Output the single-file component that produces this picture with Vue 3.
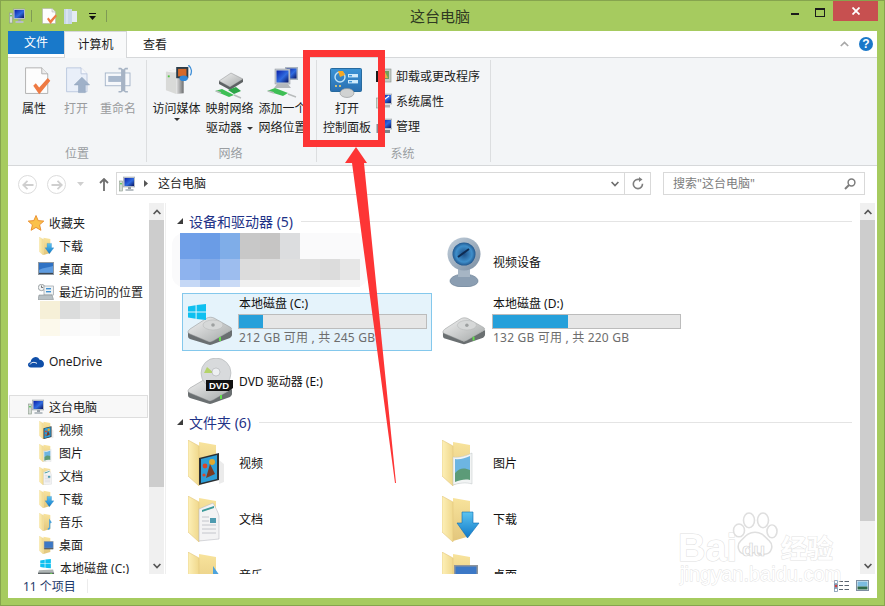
<script setup>
const bigButtons1 = [
  { icon: 'props', w: 27, h: 29, lines: ['属性'], cls: '' },
  { icon: 'open', w: 27, h: 29, lines: ['打开'], cls: 'off' },
  { icon: 'rename', w: 29, h: 29, lines: ['重命名'], cls: 'off' }
]
const bigButtons2 = [
  { icon: 'media', w: 28, h: 32, lines: ['访问媒体'], caret: 'below' },
  { icon: 'mapnet', w: 32, h: 34, lines: ['映射网络', '驱动器'], caret: 'inline' },
  { icon: 'addnet', w: 34, h: 34, lines: ['添加一个', '网络位置'] }
]
const smallTools = [
  { icon: 'uninstall', label: '卸载或更改程序' },
  { icon: 'sysprops', label: '系统属性' },
  { icon: 'manage', label: '管理' }
]
const favs = [
  { icon: 'desk', label: '桌面', w: 16, h: 13 },
  { icon: 'recent', label: '最近访问的位置', w: 16, h: 16 }
]
const folders = [
  { icon: 'film', label: '视频' },
  { icon: 'photo', label: '图片' },
  { icon: 'doc', label: '文档' },
  { icon: 'arrow', label: '下载' },
  { icon: 'music', label: '音乐' },
  { icon: 'deskov', label: '桌面' }
]
const mosaic = [
  { h: 26, c: ['#6f9fe8', '#6a9ce6', '#7fade8', '#c8c8c8', '#c6c5c4', '#dcdddf'] },
  { h: 21, c: ['#8eb3ee', '#82aae9', '#9dbdee', '#dcdcdc', '#dedede', '#e0e0e0', '#dfdfdf', '#dcdcdc', '#e6e6e6'] },
  { h: 7, c: ['#c5d8f6', '#a8c5f0', '#c9daf6', '#f0f0f0', '#f0f0f0', '#f2f2f2', '#f2f2f2', '#f4f4f4', '#f6f6f6'] }
]
const sideMosaic = [
  { h: 18, c: ['#f6f0d8', '#dbdcdc', '#e6e6e6', '#dcdcdc'] },
  { h: 17, c: ['#fcf9ec', '#fafafa', '#fbfbfb', '#f6f6f6'] }
]
</script>

<template>
  <div class="window">
    <svg class="defs" width="0" height="0" aria-hidden="true">
      <defs>
        <linearGradient id="gScreen" x1="0" y1="0" x2="1" y2="1"><stop offset="0" stop-color="#0a1fa8"/><stop offset=".55" stop-color="#2f6be0"/><stop offset="1" stop-color="#0a1560"/></linearGradient>
        <linearGradient id="gLeaf" x1="0" y1="0" x2="1" y2="0"><stop offset="0" stop-color="#fdf0b8"/><stop offset="1" stop-color="#f0d88c"/></linearGradient>
        <linearGradient id="gBack" x1="0" y1="0" x2="0" y2="1"><stop offset="0" stop-color="#f8e39c"/><stop offset="1" stop-color="#e2c67c"/></linearGradient>
        <linearGradient id="gDiskTop" x1="0" y1="0" x2="1" y2="1"><stop offset="0" stop-color="#f2f2f2"/><stop offset="1" stop-color="#a4a8a8"/></linearGradient>
        <linearGradient id="gTower" x1="0" y1="0" x2="1" y2="0"><stop offset="0" stop-color="#e4e4e4"/><stop offset="1" stop-color="#6c6e70"/></linearGradient>
        <linearGradient id="gArrow" x1="0" y1="0" x2="0" y2="1"><stop offset="0" stop-color="#5cc4f0"/><stop offset="1" stop-color="#0f78c8"/></linearGradient>
        <linearGradient id="gPanel" x1="0" y1="0" x2="0" y2="1"><stop offset="0" stop-color="#3a93d6"/><stop offset="1" stop-color="#2a6fb0"/></linearGradient>
        <radialGradient id="gLens"><stop offset="0" stop-color="#1d4f86"/><stop offset=".7" stop-color="#3f8fcb"/><stop offset="1" stop-color="#22588f"/></radialGradient>
        <linearGradient id="gRing" x1="0" y1="0" x2="1" y2="1"><stop offset="0" stop-color="#c3d0dc"/><stop offset="1" stop-color="#7b8ea2"/></linearGradient>

        <symbol id="pc" viewBox="0 0 16 16">
          <rect x="0.5" y="5" width="3" height="10" fill="#d4dbd4" stroke="#8a9a8a" stroke-width=".6"/>
          <rect x="1.3" y="7" width="1.4" height="1.4" fill="#35c43a"/>
          <rect x="4.5" y="1" width="11.5" height="10" fill="#c6ccd2" stroke="#8f98a0" stroke-width=".5"/>
          <rect x="5.5" y="2" width="9.5" height="8" fill="url(#gScreen)"/>
          <rect x="9" y="11" width="3" height="2" fill="#9aa2a8"/>
          <rect x="6.5" y="13" width="8" height="2" fill="#b8bfc4"/>
        </symbol>

        <symbol id="props" viewBox="0 0 30 34">
          <path d="M1 1H20L27 8V31H1Z" fill="#fdfdfd" stroke="#a8a8a8"/>
          <path d="M20 1V8H27" fill="#ececec" stroke="#a8a8a8"/>
          <path d="M10 22L13 19L17 24L27 13L30 16L17 32Z" fill="#ee7a43"/>
        </symbol>
        <symbol id="open" viewBox="0 0 30 34">
          <path d="M1 1H18L25 8V29H1Z" fill="#e9eff9" stroke="#b6c4dc"/>
          <path d="M18 1V8H25" fill="#f6f8fc" stroke="#b6c4dc"/>
          <path d="M10 21L19 12L28 21H23V30H15V21Z" fill="#9fb1c9" stroke="#8ca0ba" stroke-width=".6"/>
        </symbol>
        <symbol id="rename" viewBox="0 0 32 34">
          <rect x="0.5" y="7" width="29" height="15" fill="#f6f8fb" stroke="#9fb0c6"/>
          <rect x="4" y="10.500" width="18" height="7" fill="#a9b9cd"/>
          <path d="M17 1H20L22.500 3L25 1H28V3H25V28H28V30H25L22.500 28L20 30H17V28H20V3H17Z" fill="#a6b3c4" transform="translate(-1 0)"/>
        </symbol>
        <symbol id="media" viewBox="0 0 30 34">
          <path d="M1 7L12 4V31L1 27Z" fill="#d9dad8"/>
          <path d="M12 4L20 5V30L12 31Z" fill="url(#gTower)"/>
          <path d="M1 7L12 4L20 5L10 8Z" fill="#f2f2f2"/>
          <rect x="3" y="11" width="2" height="2" fill="#4cc43c"/>
          <path d="M12 2H25V14H12Z" fill="#2a3c4a"/>
          <rect x="14" y="4" width="9" height="8" fill="#d5692a"/>
          <path d="M25 0C29 3 29 8 27 11" stroke="#3f8fd8" stroke-width="1.4" fill="none"/>
          <ellipse cx="20" cy="14" rx="4.500" ry="3" fill="#2f86d6"/>
        </symbol>
        <symbol id="mapnet" viewBox="0 0 32 34">
          <path d="M5 14L17 6L29 12L16 20Z" fill="url(#gDiskTop)" stroke="#8c8f90" stroke-width=".5"/>
          <path d="M5 14L16 20L29 12V15L16 23L5 17Z" fill="#5e6264"/>
          <path d="M1 24L8 22L20 28L15 30Z" fill="#3ebf55"/>
          <path d="M14 23L22 20L27 24L20 27Z" fill="#2da548"/>
          <path d="M2 24L7 26M20 28L27 31" stroke="#b8bcbc" stroke-width="1.4"/>
        </symbol>
        <symbol id="addnet" viewBox="0 0 34 34">
          <rect x="19" y="1" width="13" height="13" fill="#a9b4c0"/>
          <rect x="20.500" y="2.500" width="10" height="10" fill="url(#gScreen)"/>
          <rect x="9" y="3" width="15" height="15" fill="#c5cbd2" stroke="#8d959c" stroke-width=".5"/>
          <rect x="10.500" y="4.500" width="12" height="12" fill="url(#gScreen)"/>
          <path d="M11 18H22L25 22H8Z" fill="#b4b8bc"/>
          <path d="M1 25L9 22L22 27L17 30Z" fill="#3ebf55"/>
          <path d="M2 25L8 27M22 28L30 31" stroke="#b8bcbc" stroke-width="1.4"/>
        </symbol>
        <symbol id="panel" viewBox="0 0 34 30">
          <rect x="0.5" y="0.5" width="31" height="23" rx="1" fill="url(#gPanel)" stroke="#276a9e"/>
          <circle cx="10" cy="9" r="5" fill="none" stroke="#bfe2f8" stroke-width="1.4"/>
          <path d="M8 3H13L15 7L10 9Z" fill="#f7a823"/>
          <rect x="18" y="6" width="10" height="3.4" fill="#cfeafb"/>
          <rect x="18" y="12" width="10" height="3.4" fill="#cfeafb"/>
          <rect x="19" y="7" width="3" height="1.4" fill="#3f95d8"/>
          <rect x="19" y="13" width="3" height="1.4" fill="#3f95d8"/>
          <circle cx="6" cy="18" r="1" fill="#ffd96a"/>
          <circle cx="10" cy="18" r="1" fill="#ffd96a"/>
          <ellipse cx="17" cy="25" rx="7" ry="4.500" fill="#d0d2d2" stroke="#8f9294" stroke-width=".6"/>
        </symbol>
        <symbol id="uninstall" viewBox="0 0 16 16">
          <rect x="0" y="3" width="2" height="11" fill="#1a1a1a"/>
          <rect x="3" y="1" width="12" height="13" fill="#c6cbc6" stroke="#88908a" stroke-width=".6"/>
          <rect x="5" y="3" width="8" height="8" fill="#6f9f5f"/>
          <path d="M6 10L9 4L12 10Z" fill="#e2b24a"/>
        </symbol>
        <symbol id="sysprops" viewBox="0 0 16 16">
          <rect x="0.5" y="5" width="3" height="10" fill="#d4dbd4" stroke="#8a9a8a" stroke-width=".6"/>
          <rect x="4" y="1" width="12" height="10" fill="#c6ccd2" stroke="#8f98a0" stroke-width=".5"/>
          <rect x="5" y="2" width="10" height="8" fill="url(#gScreen)"/>
          <path d="M6.500 8L9 6L13 3" stroke="#fff" stroke-width="1.3" fill="none"/>
          <rect x="7" y="12" width="7" height="2.500" fill="#aab0b6"/>
        </symbol>
        <symbol id="manage" viewBox="0 0 16 16">
          <rect x="0.5" y="6" width="3" height="9" fill="#878d92"/>
          <rect x="4" y="1" width="12" height="10" fill="#c6ccd2" stroke="#8f98a0" stroke-width=".5"/>
          <rect x="5" y="2" width="10" height="8" fill="url(#gScreen)"/>
          <rect x="6" y="12" width="8" height="3" fill="#7c8388"/>
        </symbol>

        <symbol id="star" viewBox="0 0 16 16">
          <path d="M8 0.5L10.200 5.600L15.800 6.100L11.600 9.800L12.900 15.300L8 12.400L3.100 15.300L4.400 9.800L0.200 6.100L5.800 5.600Z" fill="#fbc14a" stroke="#e88a2a" stroke-width=".9"/>
        </symbol>
        <symbol id="cloud" viewBox="0 0 16 12">
          <path d="M3 11.500C0.800 11.500 0 10 0 8.800C0 7.200 1.200 6.300 2.500 6.200C3 3.200 5 1 7.600 1C9.600 1 11 2.200 11.600 3.800C14 3.800 16 5.400 16 8C16 10.400 14.400 11.500 12.600 11.500Z" fill="#0f4ea8"/>
          <path d="M2 8.400C3.600 6.200 6 5.600 9 7.400" stroke="#fff" stroke-width="1" fill="none"/>
        </symbol>
        <symbol id="desk" viewBox="0 0 16 13">
          <rect x="0" y="0" width="16" height="13" fill="#8e98a2"/>
          <rect x="1" y="1" width="14" height="9.500" fill="#2f72c4"/>
          <path d="M1 8C5 5.500 10 5.500 15 4V10.500H1Z" fill="#5d9be0"/>
          <rect x="1" y="11" width="14" height="1" fill="#3c4650"/>
        </symbol>
        <symbol id="recent" viewBox="0 0 16 16">
          <circle cx="3.500" cy="3.500" r="3.200" fill="#f2f4f4" stroke="#7c8488" stroke-width=".7"/>
          <path d="M3.500 1.500V3.500H5.200" stroke="#444" stroke-width=".7" fill="none"/>
          <rect x="6" y="2" width="9.500" height="9" fill="#eef2f4" stroke="#8a9298" stroke-width=".6"/>
          <rect x="8" y="4" width="5" height="1.400" fill="#3f90d0"/>
          <rect x="8" y="7" width="5" height="1.400" fill="#3f90d0"/>
          <path d="M1 11H14L15.500 15.500H0Z" fill="#b8c0c4" stroke="#7a8286" stroke-width=".5"/>
        </symbol>

        <symbol id="fd" viewBox="0 0 44 46">
          <path d="M11 2L28 5V40L11 45Z" fill="url(#gBack)"/>
          <path d="M0 0L11 6V46L0 36Z" fill="url(#gLeaf)" stroke="#e2c67c" stroke-width=".6"/>
        </symbol>
        <symbol id="ov-film" viewBox="0 0 44 46">
          <path d="M31 20L36 24V42L31 44Z" fill="#000" opacity=".08"/>
          <path d="M11 18L31 13V40L11 45Z" fill="#2c2f33"/>
          <path d="M13 19L29 15V39L13 43Z" fill="#2d9fd8"/>
          <circle cx="17" cy="26" r="2.400" fill="#d9462a"/>
          <circle cx="24" cy="22" r="3" fill="#e2a92e"/>
          <path d="M22 24L27 34L18 38Z" fill="#7a3a22"/>
          <circle cx="16" cy="35" r="1.600" fill="#d9462a"/>
        </symbol>
        <symbol id="ov-photo" viewBox="0 0 44 46">
          <path d="M11 17C17 18 24 16 30 13V44C24 42 17 43 11 45Z" fill="#f2f4f4" stroke="#bfc4c6" stroke-width=".5"/>
          <path d="M13 19C18 20 23 18 28 16V30C23 30 18 32 13 33Z" fill="#6db5e2"/>
          <path d="M13 33C18 27 23 28 28 30V40C23 39 18 40 13 42Z" fill="#5c9b78"/>
        </symbol>
        <symbol id="ov-doc" viewBox="0 0 44 46">
          <path d="M11 13L25 7C28 12 30 16 31 20V43L11 45Z" fill="#f3f3f4" stroke="#bcbec4" stroke-width=".6"/>
          <path d="M14 14L26 10V12L14 16Z" fill="#3d9a9a"/>
          <rect x="22" y="22" width="6" height="5" fill="#4f9bb0"/>
          <path d="M14 21H21M14 25H21M14 29H28M14 33H28M14 37H28" stroke="#c4c6cc" stroke-width="1"/>
        </symbol>
        <symbol id="ov-arrow" viewBox="0 0 44 46">
          <path d="M20 16H31V27H37L25.500 42L15 27H20Z" fill="url(#gArrow)" stroke="#0f6cb4" stroke-width=".6"/>
        </symbol>
        <symbol id="ov-music" viewBox="0 0 44 46">
          <path d="M25 14L32 24C29 24 28 26 28 30V38C28 41 23 43 21 41C21 38 24 36 25 36Z" fill="#4da3dc"/>
        </symbol>
        <symbol id="ov-deskov" viewBox="0 0 44 46">
          <rect x="12" y="13" width="24" height="20" fill="#8e959c"/>
          <rect x="13.500" y="14.500" width="21" height="15" fill="#3c78c6"/>
          <rect x="13" y="31" width="22" height="2" fill="#3a4148"/>
        </symbol>

        <symbol id="win" viewBox="0 0 18 16">
          <path d="M0 2.400L7.600 1.200V7.500H0ZM8.600 1L18 0V7.500H8.600ZM0 8.500H7.600V14.800L0 13.600ZM8.600 8.500H18V16L8.600 15Z" fill="#0fc0f0"/>
        </symbol>
        <symbol id="hdd" viewBox="0 0 46 30">
          <path d="M1 17L23 27L45 15V20C45 21 44 22 43 23L25 29.500C24 30 22 30 21 29.500L3 24C2 23.500 1 23 1 21Z" fill="#6a6f71"/>
          <path d="M1 17C1 16 2 15 3 14L20 3C22 2 25 2 27 3L43 12C45 13 45 14.500 43 16L26 26C24 27 22 27 20 26L3 19C2 18.500 1 18 1 17Z" fill="url(#gDiskTop)" stroke="#8c8f90" stroke-width=".5"/>
          <ellipse cx="26" cy="10" rx="10" ry="5" fill="#d6d8d8" stroke="#b4b6b6" stroke-width=".5"/>
          <circle cx="26" cy="10" r="1.800" fill="#9da0a0"/>
          <rect x="32" y="22" width="2" height="4" fill="#62e04a"/>
        </symbol>
        <symbol id="dvd" viewBox="0 0 46 46">
          <path d="M1 33L23 43L45 31V36C45 37 44 38 43 39L25 45.500C24 46 22 46 21 45.500L3 40C2 39.500 1 39 1 37Z" fill="#6a6f71"/>
          <path d="M1 33C1 32 2 31 3 30L20 20H40L43 28C45 29 45 30.500 43 32L26 42C24 43 22 43 20 42L3 35C2 34.500 1 34 1 33Z" fill="url(#gDiskTop)" stroke="#8c8f90" stroke-width=".5"/>
          <circle cx="29" cy="15" r="15" fill="#d8dadc" stroke="#a5a8aa" stroke-width=".5"/>
          <path d="M20 9L27 15L17 15Z" fill="#b4d36a"/>
          <circle cx="29" cy="14" r="4" fill="#eef0f2" stroke="#a0a3a6" stroke-width=".5"/>
          <path d="M19 22H46V30L42 33H19Z" fill="#111"/>
          <text x="32" y="31" text-anchor="middle" font-size="9.500" font-weight="700" fill="#fff" font-family="Liberation Sans, sans-serif">DVD</text>
          <rect x="33" y="37" width="2" height="4" fill="#62e04a"/>
        </symbol>
        <symbol id="webcam" viewBox="0 0 34 50">
          <path d="M3 44C3 40 10 37 17 37C24 37 31 40 31 44C31 48 24 50 17 50C10 50 3 48 3 44Z" fill="#8b9eb2" stroke="#647a90" stroke-width=".6"/>
          <rect x="11" y="31" width="12" height="9" fill="#a6b5c4"/>
          <circle cx="17" cy="17" r="16.500" fill="url(#gRing)"/>
          <circle cx="17" cy="17" r="11.500" fill="url(#gLens)"/>
          <path d="M11 20L22 12" stroke="#0e2b52" stroke-width="2"/>
        </symbol>

        <symbol id="disksmall" viewBox="0 0 18 18">
          <use href="#win" x="2" y="0" width="12" height="10"/>
          <path d="M1 12L16 11L17 15H0Z" fill="#aeb4b4"/>
          <rect x="0" y="14.500" width="17" height="3" fill="#5d6264"/>
          <rect x="13" y="15" width="2" height="1.500" fill="#62e04a"/>
        </symbol>
      </defs>
    </svg>

    <header class="titlebar">
      <div class="qat">
        <svg class="qi" width="16" height="16"><use href="#pc"/></svg>
        <i class="qsep"></i>
        <svg class="qdoc" width="15" height="17"><use href="#props"/></svg>
        <svg class="qfold" width="14" height="15" viewBox="0 0 14 15">
          <path d="M0 0H8V15H0Z" fill="#c9d7ea"/><path d="M8 2H13V13H8Z" fill="#e4ebf4"/><path d="M3 0V15" stroke="#e8eef7"/>
        </svg>
        <svg class="qdrop" width="7" height="7" viewBox="0 0 7 7"><path d="M0 0H7V1H0ZM0 3H7L3.500 7Z" fill="#111"/></svg>
        <i class="qsep last"></i>
      </div>
      <div class="title">这台电脑</div>
      <div class="controls">
        <svg class="c-min" width="8" height="2"><rect width="8" height="2" fill="#1b1b1b"/></svg>
        <i class="c-max"></i>
        <div class="c-close">
          <svg width="8" height="8" viewBox="0 0 8 8"><path d="M0.5 0.5L7.500 7.500M7.500 0.5L0.5 7.500" stroke="#fff" stroke-width="1.800"/></svg>
        </div>
      </div>
    </header>

    <div class="tabs">
      <div class="tab-file">文件</div>
      <div class="tab-on">计算机</div>
      <div class="tab-off">查看</div>
      <div class="tab-right">
        <svg width="9" height="6" viewBox="0 0 9 6"><path d="M0.800 5L4.500 1.400L8.200 5" stroke="#a8a8a8" stroke-width="1.700" fill="none"/></svg>
        <div class="help">?</div>
      </div>
    </div>

    <section class="ribbon">
      <div class="group g1">
        <div class="tools">
          <div v-for="b in bigButtons1" :key="b.icon" class="big" :class="b.cls">
            <div class="big-ico" :class="'i-' + b.icon"><svg :width="b.w" :height="b.h"><use :href="'#' + b.icon"/></svg></div>
            <div v-for="l in b.lines" :key="l" class="big-line">{{ l }}</div>
          </div>
        </div>
        <div class="caption">位置</div>
      </div>
      <div class="group g2">
        <div class="tools">
          <div v-for="b in bigButtons2" :key="b.icon" class="big">
            <div class="big-ico" :class="'i-' + b.icon"><svg :width="b.w" :height="b.h"><use :href="'#' + b.icon"/></svg></div>
            <div v-for="(l, i) in b.lines" :key="l" class="big-line">{{ l }}<i v-if="b.caret === 'inline' && i === 1" class="caret inl"></i></div>
            <i v-if="b.caret === 'below'" class="caret blw"></i>
          </div>
        </div>
        <div class="caption">网络</div>
      </div>
      <div class="group g3">
        <div class="tools">
          <div class="big cp">
            <div class="big-ico i-panel"><svg width="34" height="30"><use href="#panel"/></svg></div>
            <div class="big-line">打开</div>
            <div class="big-line">控制面板</div>
          </div>
          <div class="small-list">
            <div v-for="s in smallTools" :key="s.icon" class="small-row">
              <svg width="16" height="16"><use :href="'#' + s.icon"/></svg>
              <span>{{ s.label }}</span>
            </div>
          </div>
        </div>
        <div class="caption">系统</div>
      </div>
    </section>

    <nav class="navbar">
      <div class="round"><svg width="12" height="10" viewBox="0 0 12 10"><path d="M5.500 0.800L1.200 5L5.500 9.200M1.500 5H11.500" stroke="#cfcfcf" stroke-width="1.800" fill="none"/></svg></div>
      <div class="round r2"><svg width="12" height="10" viewBox="0 0 12 10"><path d="M6.500 0.800L10.800 5L6.500 9.200M10.500 5H0.500" stroke="#cfcfcf" stroke-width="1.800" fill="none"/></svg></div>
      <svg class="navdrop" width="7" height="4" viewBox="0 0 7 4"><path d="M0 0H7L3.500 4Z" fill="#cfcfcf"/></svg>
      <svg class="navup" width="10" height="13" viewBox="0 0 10 13"><path d="M5 1V13M1 5L5 1L9 5" stroke="#6e6e6e" stroke-width="1.800" fill="none"/></svg>
      <div class="address">
        <svg class="a-pc" width="16" height="16"><use href="#pc"/></svg>
        <svg class="a-tri" width="4" height="7" viewBox="0 0 4 7"><path d="M0 0L4 3.500L0 7Z" fill="#555"/></svg>
        <span class="a-text">这台电脑</span>
        <svg class="a-chev" width="8" height="6" viewBox="0 0 8 6"><path d="M0.600 1L4 4.600L7.400 1" stroke="#6d6d6d" stroke-width="1.600" fill="none"/></svg>
        <div class="a-refresh">
          <svg width="12" height="13" viewBox="0 0 12 13"><path d="M10.500 6.800A4.600 4.600 0 1 1 6 2.400H8" stroke="#7f7f7f" stroke-width="1.600" fill="none"/><path d="M7 0L10.500 2.400L7 5Z" fill="#7f7f7f"/></svg>
        </div>
      </div>
      <div class="search">
        <span>搜索"这台电脑"</span>
        <svg width="12" height="12" viewBox="0 0 12 12"><circle cx="7.500" cy="4.500" r="3.400" fill="none" stroke="#7d7d7d" stroke-width="1.500"/><path d="M5 7L1 11" stroke="#7d7d7d" stroke-width="2"/></svg>
      </div>
    </nav>

    <div class="main">
      <aside class="sidebar">
        <div class="side-list">
          <div class="row l1"><svg width="16" height="16"><use href="#star"/></svg><span>收藏夹</span></div>
          <div class="row l2"><svg class="sf" width="15" height="18" viewBox="0 0 37 45"><use href="#fd" width="44" height="46"/><use href="#ov-arrow" width="44" height="46"/></svg><span>下载</span></div>
          <div v-for="f in favs" :key="f.icon" class="row l2"><svg :width="f.w" :height="f.h"><use :href="'#' + f.icon"/></svg><span>{{ f.label }}</span></div>
          <div class="side-mosaic">
            <div v-for="(r, i) in sideMosaic" :key="i" class="m-row" :style="{ height: r.h + 'px' }">
              <i v-for="(c, j) in r.c" :key="j" class="tile" :style="{ background: c }"></i>
            </div>
          </div>
          <div class="row l1"><svg width="16" height="12"><use href="#cloud"/></svg><span>OneDrive</span></div>
          <div class="side-gap"></div>
          <div class="row l1 sel"><svg width="16" height="16"><use href="#pc"/></svg><span>这台电脑</span></div>
          <div v-for="p in folders" :key="p.icon" class="row l2">
            <svg class="sf" width="15" height="18" viewBox="0 0 37 45"><use href="#fd" width="44" height="46"/><use :href="'#ov-' + p.icon" width="44" height="46"/></svg><span>{{ p.label }}</span>
          </div>
          <div class="row l2"><svg width="17" height="17"><use href="#disksmall"/></svg><span>本地磁盘 (C:)</span></div>
        </div>
      </aside>
      <div class="scroll side-scroll">
        <div class="sb-btn"><svg width="8" height="6" viewBox="0 0 8 6"><path d="M0.600 5L4 1.400L7.400 5" stroke="#555" stroke-width="1.700" fill="none"/></svg></div>
        <div class="sb-thumb t1"></div>
        <div class="sb-track"></div>
        <div class="sb-btn"><svg width="8" height="6" viewBox="0 0 8 6"><path d="M0.600 1L4 4.600L7.400 1" stroke="#555" stroke-width="1.700" fill="none"/></svg></div>
      </div>

      <main class="content">
        <div class="heading"><i class="tri"></i><span>设备和驱动器 (5)</span><i class="rule"></i></div>
        <div class="grid devices">
          <div class="cell">
            <div class="mosaic">
              <div v-for="(r, i) in mosaic" :key="i" class="m-row" :style="{ height: r.h + 'px' }">
                <i v-for="(c, j) in r.c" :key="j" class="tile" :style="{ background: c }"></i>
              </div>
            </div>
          </div>
          <div class="cell center">
            <div class="ico"><svg width="34" height="50"><use href="#webcam"/></svg></div>
            <div class="name">视频设备</div>
          </div>
          <div class="cell drive selected">
            <div class="ico disk">
              <svg class="winlogo" width="18" height="16"><use href="#win"/></svg>
              <svg width="46" height="30"><use href="#hdd"/></svg>
            </div>
            <div class="txt">
              <div class="dname">本地磁盘 (C:)</div>
              <div class="bar"><i class="fill c"></i></div>
              <div class="info">212 GB 可用 , 共 245 GB</div>
            </div>
          </div>
          <div class="cell drive">
            <div class="ico disk"><svg width="44" height="30"><use href="#hdd"/></svg></div>
            <div class="txt">
              <div class="dname">本地磁盘 (D:)</div>
              <div class="bar"><i class="fill d"></i></div>
              <div class="info">132 GB 可用 , 共 220 GB</div>
            </div>
          </div>
          <div class="cell center dvdcell">
            <div class="ico"><svg width="46" height="46"><use href="#dvd"/></svg></div>
            <div class="name">DVD 驱动器 (E:)</div>
          </div>
        </div>

        <div class="heading h2"><i class="tri"></i><span>文件夹 (6)</span><i class="rule"></i></div>
        <div class="grid folders">
          <div v-for="f in folders" :key="f.icon" class="cell center">
            <div class="ico"><svg width="44" height="46" viewBox="0 0 44 46"><use href="#fd"/><use :href="'#ov-' + f.icon"/></svg></div>
            <div class="name">{{ f.label }}</div>
          </div>
        </div>
      </main>

      <div class="scroll main-scroll">
        <div class="sb-btn"><svg width="8" height="6" viewBox="0 0 8 6"><path d="M0.600 5L4 1.400L7.400 5" stroke="#555" stroke-width="1.700" fill="none"/></svg></div>
        <div class="sb-thumb t2"></div>
        <div class="sb-track"></div>
        <div class="sb-btn"><svg width="8" height="6" viewBox="0 0 8 6"><path d="M0.600 1L4 4.600L7.400 1" stroke="#555" stroke-width="1.700" fill="none"/></svg></div>
      </div>
    </div>

    <footer class="status">
      <span class="count">11 个项目</span>
      <i class="status-sep"></i>
      <div class="views">
        <svg width="15" height="12" viewBox="0 0 15 12">
          <rect x="0.5" y="0.5" width="3" height="3" fill="#fff" stroke="#7b93ad" stroke-width=".8"/>
          <rect x="0.5" y="4.500" width="3" height="3" fill="#d04040" stroke="#7b93ad" stroke-width=".8"/>
          <rect x="0.5" y="8.500" width="3" height="3" fill="#fff" stroke="#7b93ad" stroke-width=".8"/>
          <path d="M5 1.500H9M10.500 1.500H15M5 5.500H9M10.500 5.500H15M5 9.500H9M10.500 9.500H15" stroke="#5a6470" stroke-width="1"/>
        </svg>
        <svg width="13" height="11" viewBox="0 0 13 11">
          <rect x="0.5" y="0.5" width="12" height="10" fill="#e8eef2" stroke="#7d8ea0"/>
          <rect x="1.500" y="1.500" width="10" height="5" fill="#7cbce0"/>
          <rect x="1.500" y="6.500" width="10" height="3" fill="#2f6a4a"/>
        </svg>
      </div>
    </footer>

    <div class="highlight"></div>
    <svg class="pointer" width="885" height="606" viewBox="0 0 885 606">
      <path d="M356 147L367 163H364L396 483H395L352 163H345Z" fill="#fd3535"/>
    </svg>

    <div class="mark">
      <div class="mark-top">
        <span class="bai">Bai</span>
        <svg class="paw" width="46" height="46" viewBox="0 0 46 50" preserveAspectRatio="none">
          <g fill="#fff" stroke="#dfdfdf" stroke-width="1.600">
            <ellipse cx="7" cy="20" rx="5.500" ry="7"/>
            <ellipse cx="17" cy="9" rx="5.500" ry="8"/>
            <ellipse cx="31" cy="9" rx="5.500" ry="8"/>
            <ellipse cx="40" cy="21" rx="5" ry="7"/>
            <path d="M23 22C30 22 33 27 37 31C42 36 40 46 32 46C28 46 26 44 23 44C20 44 18 46 14 46C6 46 4 36 9 31C13 27 16 22 23 22Z"/>
          </g>
        </svg>
        <span class="du">du</span>
        <span class="jy">经验</span>
      </div>
      <div class="mark-url">jingyan.baidu.com</div>
    </div>
  </div>
</template>

<style scoped>
.window {
  position: relative;
  width: 885px;
  height: 606px;
  box-sizing: border-box;
  border: 1px solid #86a44e;
  background: #a6cb5f;
  padding: 0 7px 7px;
  display: flex;
  flex-direction: column;
  overflow: hidden;
  font-family: "Noto Sans", "Noto Sans CJK SC", sans-serif;
  font-size: 12px;
  color: #1c1c1c;
}
.defs { position: absolute; }
svg { display: block; flex: none; }
i { display: block; font-style: normal; flex: none; }

.titlebar { height: 30px; display: flex; flex: none; }
.qat { width: 96px; flex: none; display: flex; align-items: center; }
.qi { margin-left: 1px; }
.qsep { width: 1px; height: 12px; background: #7f9a55; margin-left: 6px; }
.qsep.last { margin-left: 10px; }
.qdoc { margin-left: 10px; }
.qfold { margin-left: 7px; }
.qdrop { margin-left: 11px; }
.title { flex: 1; text-align: center; font-size: 15px; line-height: 30px; color: #2f3a22; }
.controls { width: 102px; flex: none; display: flex; justify-content: flex-end; margin-right: -1px; align-items: flex-start; }
.c-min { margin: 12px 0 0 0; }
.c-max { width: 8px; height: 6px; border: 1px solid #1b1b1b; border-top-width: 2px; margin: 7px 0 0 16px; }
.c-close { width: 45px; height: 20px; background: #c75050; margin-left: 8px; display: flex; align-items: center; justify-content: center; }

.tabs { height: 26px; flex: none; display: flex; background: #fff; border-bottom: 1px solid #d6d8da; position: relative; }
.tab-file { width: 56px; height: 23px; background: #1979ca; color: #fff; text-align: center; line-height: 23px; }
.tab-on { width: 61px; height: 26px; margin-bottom: -1px; background: #f8f9fa; border: 1px solid #d6d8da; border-bottom: 0; text-align: center; line-height: 25px; box-sizing: content-box; }
.tab-off { padding-left: 16px; line-height: 27px; }
.tab-right { margin-left: auto; display: flex; align-items: center; padding-right: 4px; gap: 10px; }
.help { width: 14px; height: 14px; border-radius: 50%; background: #1a78c8; color: #fff; font-weight: 700; font-size: 12px; line-height: 14px; text-align: center; font-family: "Liberation Sans", sans-serif; }

.ribbon { height: 102px; flex: none; padding: 2px 0 3px; display: flex; background: #f3f5f7; border-bottom: 1px solid #d6d8da; }
.group { display: flex; flex-direction: column; border-right: 1px solid #dcdee0; box-sizing: border-box; }
.g1 { width: 139px; padding-left: 5px; }
.g2 { width: 170px; padding-left: 3px; }
.g3 { width: 174px; padding-left: 3px; }
.tools { display: flex; height: 84px; }
.big { position: relative; text-align: center; display: flex; flex-direction: column; align-items: center; }
.g1 .big { width: 42px; }
.g2 .big { width: 53px; }
.big-ico { height: 39px; display: flex; align-items: flex-start; justify-content: center; box-sizing: border-box; }
.i-props { padding: 7px 0 0 7px; }
.i-open { padding: 7px 0 0 5px; }
.i-rename { padding-top: 7px; }
.i-media { padding: 5px 0 0 5px; }
.i-mapnet { padding-top: 7px; }
.i-addnet { padding-top: 6px; }
.i-panel { padding-top: 8px; }
.big-line { line-height: 19px; height: 19px; white-space: nowrap; }
.off { color: #9a9c9e; }
.caption { height: 18px; line-height: 20px; text-align: center; color: #9a9ea2; margin-left: -5px; }
.caret { width: 0; height: 0; border-left: 3px solid transparent; border-right: 3px solid transparent; border-top: 3px solid #333; }
.caret.inl { display: inline-block; margin-left: 5px; vertical-align: 2px; }
.caret.blw { margin-top: 0; }
.cp { width: 54px; margin-right: 4px; }
.small-list { padding-top: 3px; }
.small-row { height: 25px; display: flex; align-items: center; gap: 2px; white-space: nowrap; margin-left: -2px; }
.small-row span { margin-left: 2px; }

.navbar { height: 37px; flex: none; background: #fff; position: relative; display: flex; align-items: flex-start; padding-top: 6px; box-sizing: border-box; }
.round { width: 19px; height: 19px; flex: none; box-sizing: border-box; border: 1.500px solid #dcdcdc; border-radius: 50%; display: flex; align-items: center; justify-content: center; margin: 3px 0 0 10px; }
.r2 { margin-left: 10px; }
.navdrop { margin: 10px 0 0 11px; }
.navup { margin: 6px 0 0 15px; }
.address { width: 535px; height: 23px; flex: none; box-sizing: border-box; border: 1px solid #d9d9d9; margin-left: 7px; display: flex; align-items: center; }
.a-pc { margin-left: 2px; }
.a-tri { margin-left: 9px; }
.a-text { margin-left: 10px; margin-top: -2px; }
.a-chev { margin-left: auto; margin-right: 5px; }
.a-refresh { width: 25px; height: 21px; border-left: 1px solid #d9d9d9; display: flex; align-items: center; justify-content: center; }
.search { width: 202px; height: 23px; flex: none; box-sizing: border-box; border: 1px solid #d9d9d9; margin-left: 12px; display: flex; align-items: center; justify-content: space-between; padding: 0 8px 0 9px; color: #7d7d7d; }
.search span { margin-top: -2px; }

.main { flex: 1; min-height: 0; display: flex; background: #fff; overflow: hidden; }
.sidebar { width: 141px; flex: none; overflow: hidden; }
.side-list { padding-top: 8px; }
.row { height: 23px; display: flex; align-items: center; white-space: nowrap; box-sizing: border-box; margin: 0 1px; }
.row svg { margin-right: 5px; }
.row svg.sf { margin-left: 1px; }
.l1 { padding-left: 19px; }
.l2 { padding-left: 29px; }
.sel { background: #f8f8f8; border: 1px solid #dedede; padding-left: 18px; height: 23px; }
.side-mosaic { height: 46px; box-sizing: border-box; padding: 0 0 11px 32px; margin-top: -2px; margin-bottom: 3px; }
.side-gap { height: 22px; }
.m-row { display: flex; }
.tile { width: 20px; height: 100%; }

.scroll { width: 15px; flex: none; background: #f0f0f0; display: flex; flex-direction: column; }
.sb-btn { height: 17px; display: flex; align-items: center; justify-content: center; flex: none; }
.sb-thumb { background: #cdcdcd; flex: none; }
.t1 { height: 267px; }
.t2 { height: 301px; }
.sb-track { flex: 1; }
.side-scroll { margin-right: 1px; }
.main-scroll { margin-right: 1px; }

.content { width: 695px; flex: none; box-sizing: border-box; border-left: 1px solid #efefef; padding: 8px 8px 0 16px; overflow: hidden; }
.heading { height: 20px; display: flex; align-items: center; margin-left: -5px; color: #1e3287; font-size: 14px; white-space: nowrap; }
.tri { width: 0; height: 0; border-bottom: 6px solid #3c3c3c; border-left: 6px solid transparent; margin-right: 6px; margin-top: -1px; }
.rule { flex: 1; height: 1px; background: #e4e4e4; margin-left: 8px; }
.h2 { margin-top: 1px; margin-bottom: 3px; }
.grid { display: grid; grid-template-columns: 254px 254px; }
.devices { margin-top: 2px; grid-auto-rows: 58px; row-gap: 2px; }
.folders { grid-auto-rows: 56px; }
.cell { display: flex; position: relative; }
.center { align-items: center; }
.dvdcell { padding-bottom: 3px; box-sizing: border-box; }
.ico { width: 56px; flex: none; display: flex; justify-content: center; }
.name { padding-left: 1px; white-space: nowrap; color: #111; }
.mosaic { margin-left: -10px; padding: 0 8px; width: 180px; background: #fafafb; border-radius: 12px; height: 54px; }
.drive { width: 250px; box-sizing: border-box; border: 1px solid transparent; padding-top: 2px; }
.drive .ico { margin-left: -1px; }
.selected { background: #e5f3fb; border-color: #84c8ec; }
.disk { position: relative; padding-top: 19px; box-sizing: border-box; }
.winlogo { position: absolute; left: 6px; top: 8px; }
.txt { width: 189px; flex: none; }
.dname { line-height: 16px; height: 16px; color: #111; white-space: nowrap; padding-left: 1px; }
.bar { height: 15px; box-sizing: border-box; margin-top: 2px; background: #e6e6e6; border: 1px solid #bcbcbc; }
.fill { height: 100%; background: #26a0da; }
.fill.c { width: 13%; }
.fill.d { width: 40%; }
.info { line-height: 16px; margin-top: 1px; padding-left: 1px; color: #6d6d6d; white-space: nowrap; letter-spacing: .2px; }

.status { height: 24px; flex: none; background: #fff; display: flex; align-items: center; padding-left: 15px; }
.count { color: #1e3a6a; }
.status-sep { width: 1px; height: 14px; background: #ececec; margin-left: 11px; }
.views { margin-left: auto; display: flex; gap: 7px; padding-right: 8px; }

.highlight { position: absolute; left: 302px; top: 49px; width: 82px; height: 97px; box-sizing: border-box; border: 7px solid #fd3535; }
.pointer { position: absolute; left: -1px; top: -1px; pointer-events: none; }

.mark { position: absolute; left: 677px; top: 522px; width: 160px; color: #fff; font-family: "Liberation Sans", sans-serif; }
.mark-top { height: 47px; position: relative; }
.bai { position: absolute; left: 0; top: 3px; font-size: 38px; line-height: 44px; font-weight: 700; -webkit-text-stroke: 1px #e0e0e0; paint-order: stroke fill; }
.paw { position: absolute; left: 54px; top: -11px; }
.du { position: absolute; left: 64px; top: 18px; font-size: 19px; line-height: 18px; font-weight: 700; color: #fff; -webkit-text-stroke: .7px #d4d4d4; }
.jy { position: absolute; left: 103px; top: 9px; font-size: 26px; line-height: 30px; font-family: "Noto Sans CJK SC", sans-serif; font-weight: 700; -webkit-text-stroke: 1px #e2e2e2; paint-order: stroke fill; white-space: nowrap; }
.mark-url { font-size: 20px; line-height: 19px; margin-top: -5px; margin-left: 2px; white-space: nowrap; -webkit-text-stroke: .8px #e0e0e0; paint-order: stroke fill; }
</style>

<style>
html, body { margin: 0; padding: 0; background: #fff; }
</style>
